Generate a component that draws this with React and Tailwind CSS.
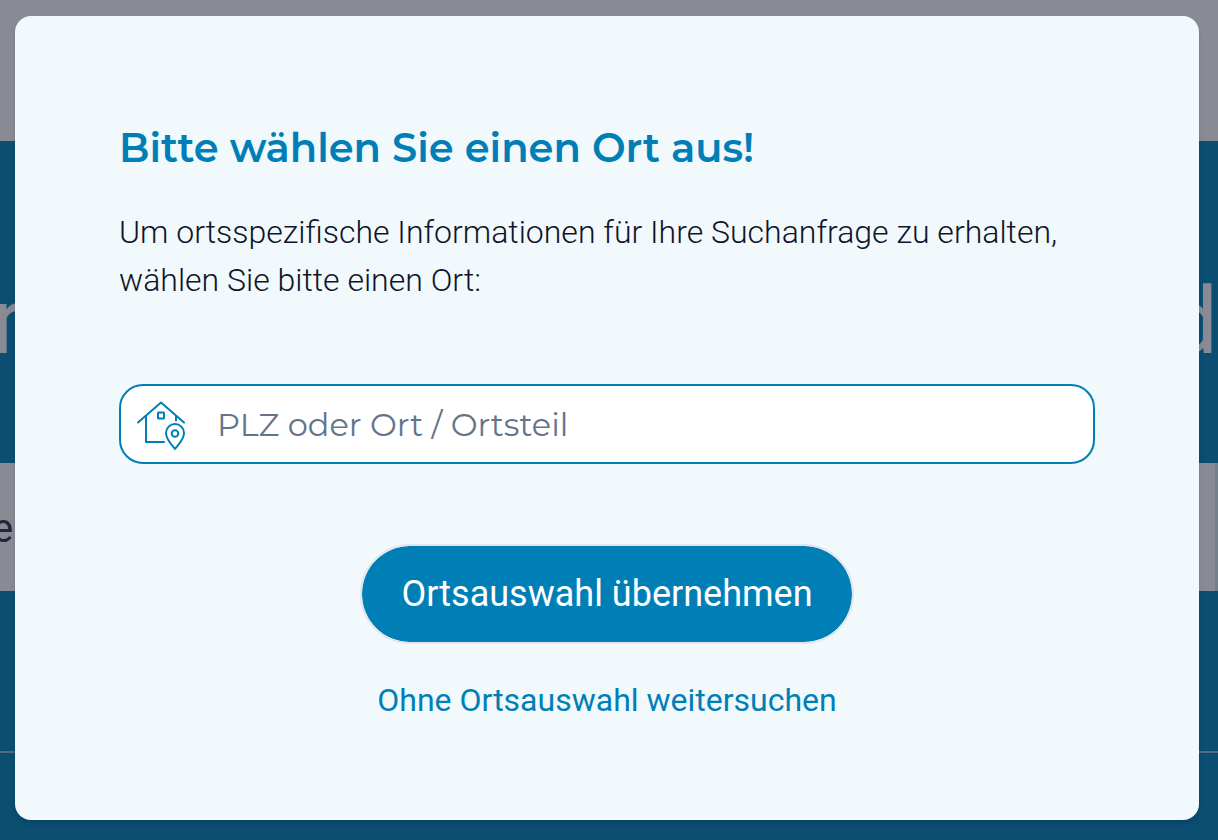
import { useState } from "react";

function HousePinIcon() {
  return (
    <svg
      viewBox="0 0 50 50"
      className="size-[50px] shrink-0"
      fill="none"
      stroke="#007fb7"
      strokeWidth="2"
      strokeLinecap="round"
      strokeLinejoin="round"
      aria-hidden="true"
    >
      <path d="M2 22.500 L25 2.500 L48 22.500" />
      <path d="M10 16v26h18" />
      <path d="M40 16.500v4" />
      <rect x="22" y="12.500" width="6" height="6" rx="0.500" />
      <path d="M39 49c-3-4-9-9.500-9-16a9 9 0 0 1 18 0c0 6.500-6 12-9 16z" />
      <circle cx="39" cy="33.500" r="3.300" />
    </svg>
  );
}

function Backdrop() {
  return (
    <div className="flex min-h-screen flex-col overflow-hidden bg-[#0b4e72]" aria-hidden="true">
      <div className="h-[141px] bg-[#898b94]" />
      <div className="flex h-[322px] items-center justify-between pt-10 text-[92px] text-[#898b94]">
        <span className="-ml-2">r</span>
        <span>d</span>
      </div>
      <div className="flex h-32 items-center justify-between border-r-3 border-[#727f88] bg-[#898b94] pt-1 text-[40px] text-[#23263a]">
        <span className="-ml-2">e</span>
      </div>
      <div className="mt-40 h-[2px] bg-[#566b82]" />
    </div>
  );
}

export default function App() {
  const [place, setPlace] = useState("");
  return (
    <div className="relative min-h-screen font-[Roboto,sans-serif]">
      <Backdrop />
      <div className="absolute inset-0 pt-4 pr-[19px] pl-[15px]">
        <form
          role="dialog"
          aria-labelledby="title"
          onSubmit={(e) => e.preventDefault()}
          className="flex flex-col rounded-2xl bg-[#f1f9fc] px-[104px] pt-[108px] pb-24 shadow-md"
        >
          <h1
            id="title"
            className="font-[Montserrat,Inter,sans-serif] text-[40px] leading-12 font-semibold text-[#007fb7]"
          >
            Bitte wählen Sie einen Ort aus!
          </h1>
          <p className="mt-9 text-[32px] leading-12 font-light text-[#10142a]">
            Um ortsspezifische Informationen für Ihre Suchanfrage zu erhalten, wählen Sie bitte einen Ort:
          </p>
          <label className="mt-20 flex h-20 items-center gap-[31px] rounded-3xl border-2 border-[#007fb7] bg-white pt-[2px] pr-4 pl-[15px]">
            <HousePinIcon />
            <input
              type="text"
              aria-label="PLZ oder Ort / Ortsteil"
              placeholder="PLZ oder Ort / Ortsteil"
              value={place}
              onChange={(e) => setPlace(e.target.value)}
              className="min-w-0 grow bg-transparent font-[Montserrat,Inter,sans-serif] text-[32px] text-[#64748b] outline-none placeholder:text-[#64748b]"
            />
          </label>
          <button
            type="submit"
            className="mt-20 h-[100px] self-center rounded-full border-2 border-[#e2e6ec] bg-[#007fb7] bg-clip-padding px-[39px] text-4xl text-white"
          >
            Ortsauswahl übernehmen
          </button>
          <a href="#suche" className="mt-8 self-center text-[32px] leading-12 text-[#007fb7]">
            Ohne Ortsauswahl weitersuchen
          </a>
        </form>
      </div>
    </div>
  );
}
